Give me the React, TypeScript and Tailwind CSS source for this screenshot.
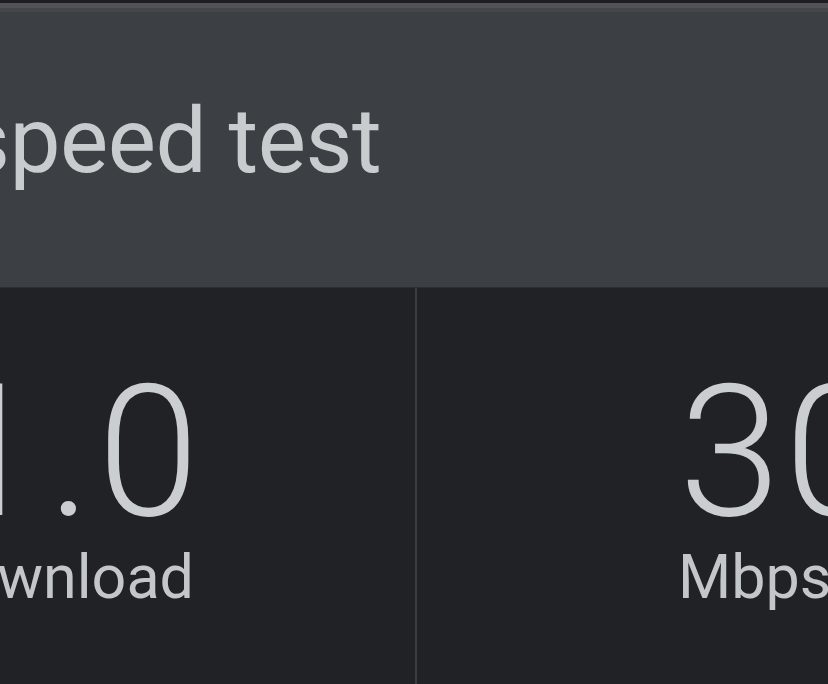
export default function App() {
  return (
    <div
      className="w-[828px] h-[684px] overflow-hidden bg-[#202226] flex flex-col"
      style={{ fontFamily: "Roboto, 'Noto Sans', sans-serif" }}
    >
      {/* title bar */}
      <div className="h-[288px] shrink-0 bg-[#3c4044] flex flex-col border-b border-[#2c2f32]">
        <div className="h-[3px] bg-[#1e1d22]" />
        <div className="h-[5px] bg-[#535257]" />
        <div className="h-[4px] bg-[#46454a]" />
        <div className="ml-[-37px] mt-[84px] text-[91px] leading-none tracking-[-0.5px] text-[#c9cccf] whitespace-nowrap">
          speed test
        </div>
      </div>

      {/* results */}
      <div className="flex flex-1">
        <div className="w-[415px] shrink-0 flex">
          <div className="w-[205px] flex flex-col items-end">
            <div className="mt-[73px] text-[183px] font-light leading-none tracking-[6px] text-[#cbced1] whitespace-nowrap">
              51.0
            </div>
            <div className="mt-[3px] mr-[11px] text-[61px] leading-none text-[#c4c7ca] whitespace-nowrap">
              Download
            </div>
          </div>
        </div>
        <div className="w-[2px] shrink-0 bg-[#393c40]" />
        <div className="flex-1 flex flex-col pl-[262px]">
          <div className="mt-[73px] text-[183px] font-light leading-none tracking-[4px] text-[#cbced1] whitespace-nowrap">
            300
          </div>
          <div className="mt-[3px] ml-[-1px] text-[61px] leading-none text-[#c4c7ca] whitespace-nowrap">
            Mbps
          </div>
        </div>
      </div>
    </div>
  );
}
